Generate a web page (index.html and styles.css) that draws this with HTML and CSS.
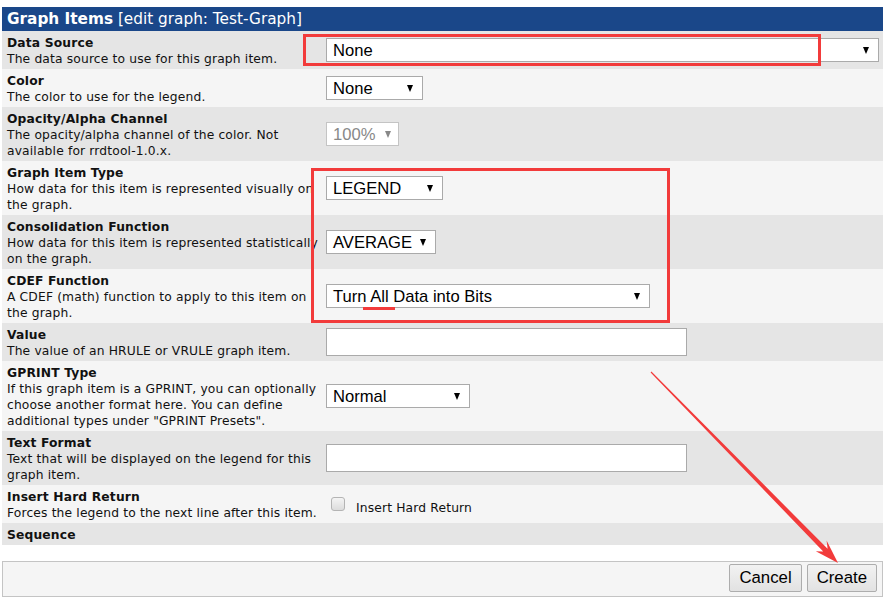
FILE: index.html
```html
<!DOCTYPE html>
<html>
<head>
<meta charset="utf-8">
<link rel="stylesheet" href="styles.css">
</head>
<body>
<div class="page">
  <div class="title"><b>Graph Items</b> [edit graph: Test-Graph]</div>

  <div class="row odd">
    <div class="lbl"><div class="name">Data Source</div><div class="desc">The data source to use for this graph item.</div></div>
    <div class="fld"><div class="sel w-ds"><span>None</span><i class="tri"></i></div></div>
  </div>
  <div class="row even">
    <div class="lbl"><div class="name">Color</div><div class="desc">The color to use for the legend.</div></div>
    <div class="fld"><div class="sel w-color"><span>None</span><i class="tri"></i></div></div>
  </div>
  <div class="row odd">
    <div class="lbl"><div class="name">Opacity/Alpha Channel</div><div class="desc">The opacity/alpha channel of the color. Not available for rrdtool-1.0.x.</div></div>
    <div class="fld"><div class="sel w-op disabled"><span>100%</span><i class="tri"></i></div></div>
  </div>
  <div class="row even">
    <div class="lbl"><div class="name">Graph Item Type</div><div class="desc">How data for this item is represented visually on the graph.</div></div>
    <div class="fld"><div class="sel w-legend"><span>LEGEND</span><i class="tri"></i></div></div>
  </div>
  <div class="row odd">
    <div class="lbl"><div class="name">Consolidation Function</div><div class="desc">How data for this item is represented statistically on the graph.</div></div>
    <div class="fld"><div class="sel w-avg"><span>AVERAGE</span><i class="tri"></i></div></div>
  </div>
  <div class="row even">
    <div class="lbl"><div class="name">CDEF Function</div><div class="desc">A CDEF (math) function to apply to this item on the graph.</div></div>
    <div class="fld"><div class="sel w-cdef"><span>Turn All Data into Bits</span><i class="tri"></i></div></div>
  </div>
  <div class="row odd">
    <div class="lbl"><div class="name">Value</div><div class="desc">The value of an HRULE or VRULE graph item.</div></div>
    <div class="fld"><div class="inp"></div></div>
  </div>
  <div class="row even">
    <div class="lbl"><div class="name">GPRINT Type</div><div class="desc">If this graph item is a GPRINT, you can optionally choose another format here. You can define additional types under "GPRINT Presets".</div></div>
    <div class="fld"><div class="sel w-gp"><span>Normal</span><i class="tri"></i></div></div>
  </div>
  <div class="row odd">
    <div class="lbl"><div class="name">Text Format</div><div class="desc">Text that will be displayed on the legend for this graph item.</div></div>
    <div class="fld"><div class="inp"></div></div>
  </div>
  <div class="row even">
    <div class="lbl"><div class="name">Insert Hard Return</div><div class="desc">Forces the legend to the next line after this item.</div></div>
    <div class="fld"><label class="chk"><span class="box"></span><span class="chk-text">Insert Hard Return</span></label></div>
  </div>
  <div class="row odd">
    <div class="lbl"><div class="name">Sequence</div></div>
    <div class="fld"></div>
  </div>

  <div class="footer">
    <button class="btn">Cancel</button>
    <button class="btn">Create</button>
  </div>
</div>

<div class="mark box1"></div>
<div class="mark box2"></div>
<div class="mark uline"></div>
<svg class="arrow" width="886" height="602" viewBox="0 0 886 602">
  <polygon fill="#f23b3b" points="651.4,371.6 827.6,548.8 826.6,540.6 838,563 815.8,551.2 823.2,551.5 650.6,372.4"/>
</svg>
</body>
</html>
```

FILE: styles.css
```css
html, body {
  margin: 0;
  padding: 0;
  background: #fff;
}
body {
  font-family: "DejaVu Sans", Verdana, sans-serif;
  color: #111;
}
.page {
  margin: 7px 3px 0 2px;
  width: 881px;
}
.title {
  background: #1a4789;
  color: #fff;
  height: 24px;
  line-height: 25px;
  padding-left: 5px;
  font-size: 15.3px;
  white-space: nowrap;
}
.title b {
  font-weight: bold;
}
.row {
  display: grid;
  grid-template-columns: 319px 1fr;
}
.odd { background: #e5e5e5; }
.even { background: #f5f5f5; }
.lbl {
  padding: 4px 2px 2px 5px;
  font-size: 12.3px;
  letter-spacing: 0.15px;
  line-height: 16px;
}
.name {
  font-weight: bold;
}
.fld {
  display: flex;
  align-items: center;
  padding-left: 5px;
}
.sel {
  box-sizing: border-box;
  height: 24px;
  background: #fff;
  border: 1px solid #aaa;
  display: flex;
  align-items: center;
  justify-content: space-between;
  padding: 1px 9px 0 6px;
  font-family: "Liberation Sans", Arial, sans-serif;
  font-size: 16.6px;
  color: #000;
}
.sel.disabled {
  color: #888;
  border-color: #c4c4c4;
}
.sel.disabled .tri {
  border-top-color: #888;
}
.tri {
  display: block;
  width: 0;
  height: 0;
  border-left: 3.5px solid transparent;
  border-right: 3.5px solid transparent;
  border-top: 7px solid #000;
}
.w-ds { width: 553px; }
.w-color { width: 97px; }
.w-op { width: 73px; padding-right: 7px; }
.w-legend { width: 117px; }
.w-avg { width: 110px; }
.w-cdef { width: 324px; }
.w-gp { width: 144px; }
.inp {
  box-sizing: border-box;
  width: 361px;
  height: 28px;
  background: #fff;
  border: 1px solid #aaa;
}
.chk {
  display: flex;
  align-items: center;
  gap: 11px;
  font-size: 12.3px;
  letter-spacing: 0.15px;
  padding-left: 5px;
}
.chk .box {
  box-sizing: border-box;
  width: 14px;
  height: 14px;
  border: 1px solid #b4b4b4;
  border-radius: 3px;
  background: linear-gradient(#f4f4f4, #dcdcdc);
}
.chk-text {
  padding-top: 7px;
}
.footer {
  margin-top: 16px;
  box-sizing: border-box;
  height: 36px;
  border: 1px solid #c4c4c4;
  background: #f5f5f5;
  display: flex;
  justify-content: flex-end;
  align-items: flex-start;
  gap: 5px;
  padding: 2px 5px 0 0;
}
.btn {
  box-sizing: border-box;
  height: 28px;
  padding: 0 9px;
  font-family: "Liberation Sans", Arial, sans-serif;
  font-size: 16.8px;
  color: #000;
  background: linear-gradient(#f2f2f2, #e2e2e2);
  border: 1px solid #adadad;
  border-radius: 2px;
}
.mark {
  position: absolute;
  box-sizing: border-box;
}
.box1 {
  left: 303px;
  top: 34px;
  width: 518px;
  height: 32px;
  border: 3px solid #f23b3b;
}
.box2 {
  left: 311px;
  top: 168px;
  width: 359px;
  height: 155px;
  border: 3px solid #f23b3b;
}
.uline {
  left: 363px;
  top: 307px;
  width: 32px;
  height: 3px;
  background: #f23b3b;
}
.arrow {
  position: absolute;
  left: 0;
  top: 0;
  pointer-events: none;
}
```
